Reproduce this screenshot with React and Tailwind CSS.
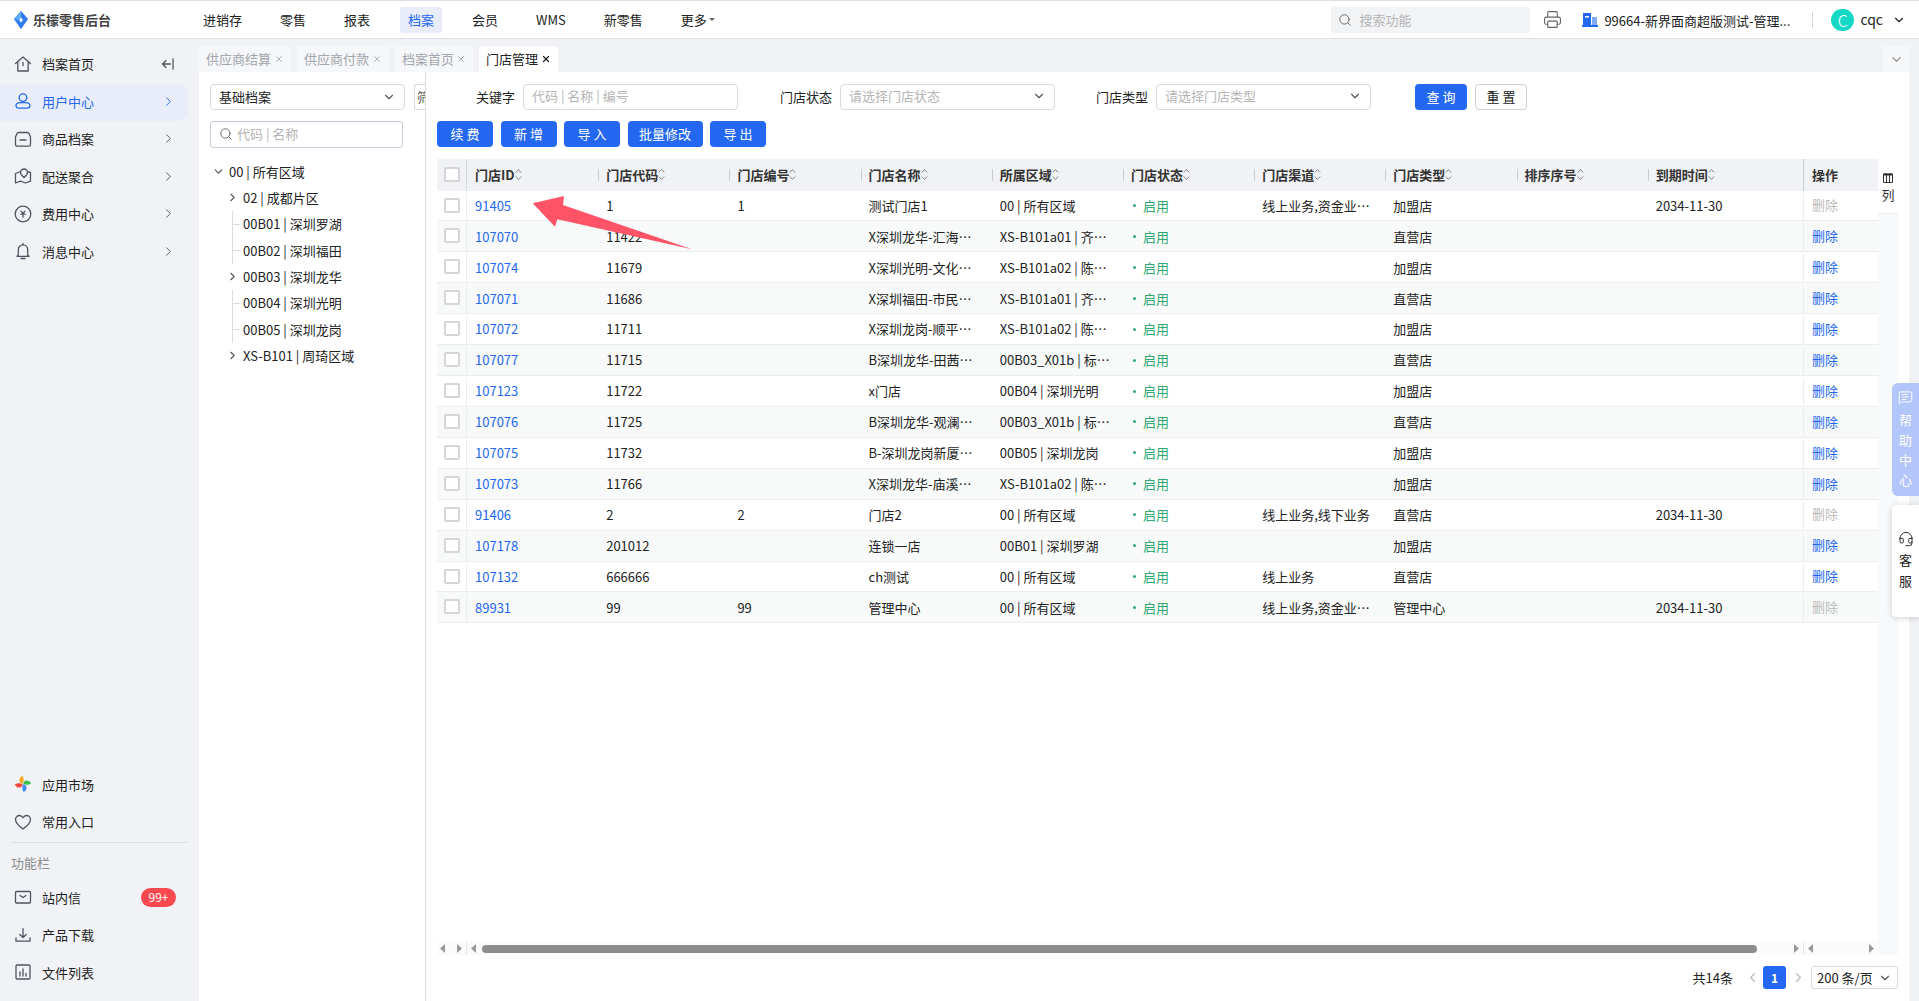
import React from 'react';
import { ChevronDown, ChevronLeft, ChevronRight, Headset, MessageSquareText, Printer, Search, X } from 'lucide-react';

const NAV = ['进销存', '零售', '报表', '档案', '会员', 'WMS', '新零售'];

const stroke = { fill: 'none', stroke: 'currentColor', strokeWidth: 1.3, strokeLinecap: 'round', strokeLinejoin: 'round' };

const Glyph = ({ children }) => (
  <svg width="18" height="18" viewBox="0 0 18 18" className="shrink-0" {...stroke}>
    {children}
  </svg>
);

const ICONS = {
  home: <Glyph><path d="M1.5 8.5 9 2l7.5 6.5M3.8 7.5V16h10.4V7.5M9 7.5v3" /></Glyph>,
  user: <Glyph><circle cx="9" cy="5.6" r="3.8" /><path d="M6.5 10.6h5c2.6 0 4.5 1.3 4.5 3s-1.4 2.6-3 2.6H5c-1.6 0-3-.9-3-2.6s1.900-3 4.500-3Z" /></Glyph>,
  goods: <Glyph><path d="M4.500 2.500h9c.8 0 1.300.5 1.600 1.200L16.500 7v7.500c0 1-.7 1.700-1.700 1.700H3.200c-1 0-1.700-.7-1.700-1.700V7l1.400-3.300c.3-.7.800-1.200 1.600-1.200Z" /><path d="M6 10h6" /></Glyph>,
  map: <Glyph><path d="M5.500 5 1.500 6.500V16l5-1.800 5 1.800 5-1.800V5.500L14.500 5" /><path d="M10 10.500c-2-1.800-3.500-3.300-3.500-5a3.500 3.500 0 0 1 7 0c0 1.700-1.500 3.200-3.500 5Z" /></Glyph>,
  fee: <Glyph><circle cx="9" cy="9" r="7.800" /><path d="m7 6.200 2 2.400 2-2.400M6.800 9.200h4.400M9 8.600v3.600" /></Glyph>,
  bell: <Glyph><path d="M4.300 13V7.500a4.700 4.700 0 0 1 9.400 0V13l1.300 1.300H3L4.300 13Z" /><path d="M7 16.500h4M9 1.500v1.300" /></Glyph>,
  heart: <Glyph><path d="M9 16C4.500 12.800 1.500 10 1.500 6.600 1.500 4.200 3.300 2.500 5.400 2.500c1.500 0 2.800.8 3.600 2.200.8-1.400 2.100-2.200 3.600-2.200 2.100 0 3.900 1.700 3.900 4.100C16.500 10 13.500 12.800 9 16Z" /></Glyph>,
  mail: <Glyph><rect x="1.500" y="3.500" width="15" height="11.500" rx="1" /><path d="m6 7.500 3 2 3-2" /></Glyph>,
  download: <Glyph><path d="M9 2.500v9M5.800 8.500 9 11.500l3.200-3M2 12v3.200h14V12" /></Glyph>,
  chart: <Glyph><rect x="2" y="2" width="14" height="14" rx="1" /><path d="M6 13V9M9 13V6M12 13v-2.500" /></Glyph>,
  apps: (
    <svg width="18" height="18" viewBox="0 0 18 18" className="shrink-0">
      <path d="M8.700 8.700C4.800 8.500 4 3.500 8.200.8c1.800 1.800 2 5.300.5 7.900Z" fill="#f7a823" />
      <path d="M9.300 8.700c.2-3.900 5.200-4.700 7.900-.5-1.800 1.800-5.300 2-7.900.5Z" fill="#3cc04f" />
      <path d="M9.300 9.300c3.900.2 4.700 5.200.5 7.900-1.800-1.800-2-5.300-.5-7.900Z" fill="#3b8cf5" />
      <path d="M8.700 9.300c-.2 3.900-5.200 4.700-7.900.5 1.800-1.800 5.300-2 7.900-.5Z" fill="#f0463c" />
    </svg>
  ),
};

const MENU_TOP = [
  { label: '档案首页', icon: 'home', collapse: true },
  { label: '用户中心', icon: 'user', active: true, arrow: true },
  { label: '商品档案', icon: 'goods', arrow: true },
  { label: '配送聚合', icon: 'map', arrow: true },
  { label: '费用中心', icon: 'fee', arrow: true },
  { label: '消息中心', icon: 'bell', arrow: true },
];

const TABS = [
  { label: '供应商结算', width: 'w-[92px]' },
  { label: '供应商付款', width: 'w-[92px]' },
  { label: '档案首页', width: 'w-[78px]' },
  { label: '门店管理', width: 'w-[79px]', active: true },
];

const COLUMNS = ['门店ID', '门店代码', '门店编号', '门店名称', '所属区域', '门店状态', '门店渠道', '门店类型', '排序序号', '到期时间'];

const ROWS = [
  { id: '91405', code: '1', no: '1', name: '测试门店1', area: '00 | 所有区域', channel: '线上业务,资金业…', type: '加盟店', expire: '2034-11-30', locked: true },
  { id: '107070', code: '11422', name: 'X深圳龙华-汇海…', area: 'XS-B101a01 | 齐…', type: '直营店' },
  { id: '107074', code: '11679', name: 'X深圳光明-文化…', area: 'XS-B101a02 | 陈…', type: '加盟店' },
  { id: '107071', code: '11686', name: 'X深圳福田-市民…', area: 'XS-B101a01 | 齐…', type: '直营店' },
  { id: '107072', code: '11711', name: 'X深圳龙岗-顺平…', area: 'XS-B101a02 | 陈…', type: '加盟店' },
  { id: '107077', code: '11715', name: 'B深圳龙华-田茜…', area: '00B03_X01b | 标…', type: '直营店' },
  { id: '107123', code: '11722', name: 'x门店', area: '00B04 | 深圳光明', type: '加盟店' },
  { id: '107076', code: '11725', name: 'B深圳龙华-观澜…', area: '00B03_X01b | 标…', type: '直营店' },
  { id: '107075', code: '11732', name: 'B-深圳龙岗新厦…', area: '00B05 | 深圳龙岗', type: '加盟店' },
  { id: '107073', code: '11766', name: 'X深圳龙华-庙溪…', area: 'XS-B101a02 | 陈…', type: '加盟店' },
  { id: '91406', code: '2', no: '2', name: '门店2', area: '00 | 所有区域', channel: '线上业务,线下业务', type: '直营店', expire: '2034-11-30', locked: true },
  { id: '107178', code: '201012', name: '连锁一店', area: '00B01 | 深圳罗湖', type: '加盟店' },
  { id: '107132', code: '666666', name: 'ch测试', area: '00 | 所有区域', channel: '线上业务', type: '直营店' },
  { id: '89931', code: '99', no: '99', name: '管理中心', area: '00 | 所有区域', channel: '线上业务,资金业…', type: '管理中心', expire: '2034-11-30', locked: true },
];

const TREE = [
  { label: '00 | 所有区域', kind: 'root' },
  { label: '02 | 成都片区', kind: 'branch' },
  { label: '00B01 | 深圳罗湖', kind: 'leaf' },
  { label: '00B02 | 深圳福田', kind: 'leaf' },
  { label: '00B03 | 深圳龙华', kind: 'branch' },
  { label: '00B04 | 深圳光明', kind: 'leaf' },
  { label: '00B05 | 深圳龙岗', kind: 'leaf' },
  { label: 'XS-B101 | 周琦区域', kind: 'branch' },
];

const GRID = 'grid grid-cols-[30px_repeat(9,131.2px)_155.2px_75px]';

const MenuItem = ({ item }) => (
  <div
    className={`flex h-[37.5px] w-[188px] items-center gap-[10px] rounded-r-[10px] pb-[2px] pl-[14px] pr-[12px] ${
      item.active ? 'bg-[#e8edf9] text-[#2468f2]' : 'text-[#4e5560]'
    }`}
  >
    {ICONS[item.icon]}
    <span className={item.active ? 'text-[#2468f2]' : 'text-[#222]'}>{item.label}</span>
    {item.arrow && <ChevronRight size={15} strokeWidth={1.5} className="ml-auto" />}
    {item.collapse && (
      <svg width="13" height="12" viewBox="0 0 13 12" className="ml-auto mr-[2px]" {...stroke}>
        <path d="M12 1v10M9.500 6H1.500M5 2.500 1.500 6 5 9.500" />
      </svg>
    )}
    {item.badge && (
      <span className="ml-auto flex h-[19px] w-[35px] items-center justify-center rounded-full bg-[#f9494f] text-[12px] text-white">
        {item.badge}
      </span>
    )}
  </div>
);

const Sidebar = () => (
  <aside className="flex w-[199px] shrink-0 flex-col bg-[#f1f2f5] pb-[9px] pt-[7px]">
    {MENU_TOP.map((item) => (
      <MenuItem key={item.label} item={item} />
    ))}
    <div className="flex-1" />
    <MenuItem item={{ label: '应用市场', icon: 'apps' }} />
    <MenuItem item={{ label: '常用入口', icon: 'heart' }} />
    <div className="ml-[11px] w-[177px] border-t border-[#dcdee2]" />
    <div className="flex h-[37px] items-center pl-[11px] pt-[3px] text-[#8c8c8c]">功能栏</div>
    <MenuItem item={{ label: '站内信', icon: 'mail', badge: '99+' }} />
    <MenuItem item={{ label: '产品下载', icon: 'download' }} />
    <MenuItem item={{ label: '文件列表', icon: 'chart' }} />
  </aside>
);

const Header = () => (
  <header className="flex h-[39px] shrink-0 items-center border-b border-t border-[#dfe0e3] bg-white pl-[14px] pr-[13px]">
    <div className="flex w-[181px] shrink-0 items-center gap-[5px]">
      <svg width="14" height="18" viewBox="0 0 14 18">
        <path d="M7 .5 13.500 8 7 17.500.5 8 7 .5Z" fill="#2f7bf0" stroke="#2f7bf0" strokeLinejoin="round" />
        <path d="M7 6.500 9 9l-2 2.500L5 9l2-2.500Z" fill="#fff" />
        <path d="M7 .5 .5 8 5 9l2-2.500V.5Z" fill="#63b0fa" />
      </svg>
      <span className="font-bold text-[#444]">乐檬零售后台</span>
    </div>
    <nav className="flex items-center gap-[22px]">
      {NAV.map((name) => (
        <a
          key={name}
          className={`flex h-[26px] items-center rounded-[3px] px-2 ${
            name === '档案' ? 'bg-[#e8edf9] text-[#2468f2]' : 'text-[#222]'
          }`}
        >
          {name}
        </a>
      ))}
      <a className="flex h-[26px] items-center gap-[2px] px-2 text-[#222]">
        更多
        <span className="h-0 w-0 border-x-[3px] border-t-[3px] border-x-transparent border-t-[#666]" />
      </a>
    </nav>
    <div className="ml-auto flex h-[26px] w-[199px] items-center gap-[7px] rounded-[3px] bg-[#f2f3f5] pl-[7px] text-[#b5b5b5]">
      <Search size={14} strokeWidth={1.6} className="text-[#666]" />
      搜索功能
    </div>
    <Printer size={19} strokeWidth={1.4} className="ml-[13px] text-[#666]" />
    <svg width="16" height="14" viewBox="0 0 16 14" className="ml-[20px]">
      <rect x="1" y="0" width="8" height="12" fill="#2468f2" />
      <rect x="10" y="4" width="5" height="8" fill="#7fa8f5" />
      <rect x="0" y="12" width="16" height="2" fill="#2468f2" />
      <rect x="3" y="3" width="4" height="1.500" fill="#fff" />
    </svg>
    <span className="ml-[6px] w-[186px] whitespace-nowrap pt-[2px] text-[#222]">99664-新界面商超版测试-管理...</span>
    <span className="ml-[22px] h-[16px] border-l border-[#d5d5d5]" />
    <span className="ml-[18px] flex h-[22px] w-[23px] items-center justify-center rounded-full bg-[#14d8c4] text-[16px] font-light text-white">
      C
    </span>
    <span className="ml-[6px] text-[14px] text-[#222]">cqc</span>
    <ChevronDown size={14} strokeWidth={2} className="ml-[9px] text-[#222]" />
  </header>
);

const Tabs = () => (
  <div className="flex h-[33px] shrink-0 items-end gap-[6px] bg-[#f1f2f5]">
    {TABS.map((tab) => (
      <div
        key={tab.label}
        className={`flex h-[26px] items-center justify-between rounded-t-[3px] px-[7px] ${tab.width} ${
          tab.active ? 'bg-white text-[#222]' : 'bg-[#f6f7f9] text-[#a3a6ad]'
        }`}
      >
        {tab.label}
        <X size={10} strokeWidth={tab.active ? 3 : 2} />
      </div>
    ))}
    <div className="ml-auto flex h-[26px] w-[26px] items-center justify-center rounded-t-[3px] bg-[#f6f7f9]">
      <ChevronDown size={15} className="text-[#8c8c8c]" />
    </div>
  </div>
);

const TreePane = () => (
  <div className="w-[227px] shrink-0 border-r border-[#dcdcdc]">
    <div className="mt-[12px] flex h-[26px] pl-[11px]">
      <div className="flex w-[195px] items-center justify-between rounded-[4px] border border-[#d9d9d9] pb-[1px] pl-[8px] pr-[8px] text-[#222]">
        基础档案
        <ChevronDown size={14} className="text-[#555]" />
      </div>
      <div className="ml-[9px] w-[11px] overflow-hidden whitespace-nowrap rounded-l-[3px] border border-r-0 border-[#d9d9d9] pl-[2px] leading-[24px] text-[#555]">
        筛选
      </div>
    </div>
    <div className="ml-[11px] mt-[11px] flex h-[27px] w-[193px] items-center gap-[4px] rounded-[3px] border border-[#c5cbd8] pb-[2px] pl-[8px] text-[#b5b5b5]">
      <Search size={14} strokeWidth={1.6} className="text-[#666]" />
      代码 | 名称
    </div>
    <div className="mt-[10.5px] text-[#222]">
      {TREE.map((node) => (
        <div
          key={node.label}
          className={`flex h-[26.3px] items-center ${
            node.kind === 'root' ? 'pl-[13px]' : node.kind === 'branch' ? 'pl-[27px]' : 'pl-[33px]'
          }`}
        >
          {node.kind === 'root' && <ChevronDown size={13} className="mr-[4px] text-[#555]" />}
          {node.kind === 'branch' && <ChevronRight size={13} className="mr-[4px] text-[#555]" />}
          {node.kind === 'leaf' && (
            <span className="flex h-full w-[11px] items-center border-l border-[#dcdcdc]">
              <span className="h-px w-[7px] bg-[#dcdcdc]" />
            </span>
          )}
          {node.label}
        </div>
      ))}
    </div>
  </div>
);

const Field = ({ label, labelWidth, placeholder, select }) => (
  <>
    <span className={`${labelWidth} shrink-0 text-right text-[#222]`}>{label}</span>
    <div className="ml-[8px] flex h-[26px] w-[215px] items-center justify-between rounded-[4px] border border-[#d9d9d9] pb-[2px] pl-[8px] pr-[8px] text-[#b5b5b5]">
      {placeholder}
      {select && <ChevronDown size={14} className="text-[#555]" />}
    </div>
  </>
);

const SortIcon = () => (
  <svg width="7" height="13" viewBox="0 0 7 13" className="shrink-0" fill="none" stroke="#888" strokeWidth="1">
    <path d="m.8 4.500 2.700-3 2.700 3M.8 8.500l2.700 3 2.700-3" />
  </svg>
);

const Box = () => <span className="block h-[15px] w-[16px] rounded-[2px] border-2 border-[#d6d6d6] bg-white" />;

const Triangle = ({ left }) => (
  <svg width="5" height="9" viewBox="0 0 5 9" className="shrink-0" fill="#999">
    <path d={left ? 'M5 0v9L0 4.500Z' : 'M0 0v9l5-4.500Z'} />
  </svg>
);

const Cell = ({ children }) => <div className="overflow-hidden whitespace-nowrap pl-2 text-[#222]">{children}</div>;

const StoreTable = () => (
  <div className="flex w-[1441px] shrink-0 flex-col">
    <div className={`${GRID} h-[31.500px] shrink-0 items-center bg-[#f1f2f5]`}>
      <div className="flex h-full items-center justify-center border-r border-[#d5d8de]">
        <Box />
      </div>
      {COLUMNS.map((name, i) => (
        <div key={name} className="relative flex items-center pl-2 font-bold text-[#333]">
          {i > 0 && <span className="absolute left-0 h-[12px] border-l border-[#c9ccd2]" />}
          {name}
          <SortIcon />
        </div>
      ))}
      <div className="flex h-full items-center border-l border-[#c9ccd2] pl-2 font-bold text-[#333]">操作</div>
    </div>
    {ROWS.map((row, i) => (
      <div
        key={row.id}
        className={`${GRID} h-[30.930px] shrink-0 items-center border-b border-[#eceded] ${i % 2 ? 'bg-[#f8fafa]' : 'bg-white'}`}
      >
        <div className="mt-[2px] flex h-[28px] items-center justify-center border-r border-[#eceded] pb-[3px]">
          <Box />
        </div>
        <Cell><span className="text-[#2468f2]">{row.id}</span></Cell>
        <Cell>{row.code}</Cell>
        <Cell>{row.no}</Cell>
        <Cell>{row.name}</Cell>
        <Cell>{row.area}</Cell>
        <Cell>
          <span className="flex items-center gap-[7px] pl-[2px] text-[#2fa871]">
            <span className="h-[3px] w-[3px] rounded-full bg-[#2fa871]" />
            启用
          </span>
        </Cell>
        <Cell>{row.channel}</Cell>
        <Cell>{row.type}</Cell>
        <Cell />
        <Cell>{row.expire}</Cell>
        <div className={`mt-[2px] flex h-[28px] items-center border-l border-[#eceded] pb-[3px] pl-2 ${row.locked ? 'text-[#bbb]' : 'text-[#2468f2]'}`}>
          删除
        </div>
      </div>
    ))}
    <div className="flex-1" />
    <div className="flex h-[13px] shrink-0 items-center bg-[#fbfbfc]">
      <div className="flex h-full w-[30px] items-center justify-between border-r border-[#e6e6e6] pl-[3px] pr-[4px]">
        <Triangle left />
        <Triangle />
      </div>
      <div className="flex h-full w-[1336px] items-center pl-[4px] pr-[4px]">
        <Triangle left />
        <span className="ml-[6px] h-[8px] w-[1275px] rounded-full bg-[#8c8c8c]" />
        <span className="ml-auto"><Triangle /></span>
      </div>
      <div className="flex h-full w-[75px] items-center justify-between border-l border-[#e6e6e6] pl-[4px] pr-[4px]">
        <Triangle left />
        <Triangle />
      </div>
    </div>
  </div>
);

const ColumnPanel = () => (
  <div className="h-full w-[20px] bg-[#f8f9fb]">
    <div className="flex h-[55px] flex-col items-center border-b border-[#eceded] bg-white pt-[14px] text-[#333]">
      <svg width="10" height="10" viewBox="0 0 10 10" fill="none" stroke="#333">
        <path d="M.5 1h9v8.500h-9ZM3.500 1v8.500M6.500 1v8.500" />
        <path d="M.5 1.500h9" strokeWidth="2" />
      </svg>
      <span className="mt-[1px] leading-[22px]">列</span>
    </div>
  </div>
);

const Pager = () => (
  <div className="flex h-[46px] shrink-0 items-start justify-end pr-[11px] pt-[11px] text-[#222]">
    <span className="leading-[23px]">共14条</span>
    <ChevronLeft size={15} className="ml-[12px] mt-[4px] text-[#bbb]" />
    <span className="ml-[3px] flex h-[23px] w-[23px] items-center justify-center rounded-[3px] bg-[#2468f2] text-[12px] font-bold text-white">
      1
    </span>
    <ChevronRight size={15} className="ml-[5px] mt-[4px] text-[#bbb]" />
    <div className="ml-[5px] flex h-[23px] w-[87px] items-center justify-between rounded-[3px] border border-[#d9d9d9] pl-[5px] pr-[5px]">
      200 条/页
      <ChevronDown size={14} className="text-[#555]" />
    </div>
  </div>
);

const StorePane = () => (
  <div className="flex min-w-0 flex-1 flex-col pl-[11px]">
    <div className="mt-[12px] flex h-[26px] shrink-0 items-center">
      <Field label="关键字" labelWidth="w-[78px]" placeholder="代码 | 名称 | 编号" />
      <Field label="门店状态" labelWidth="w-[94px]" placeholder="请选择门店状态" select />
      <Field label="门店类型" labelWidth="w-[93px]" placeholder="请选择门店类型" select />
      <button className="ml-[44px] h-[26px] w-[52px] rounded-[4px] bg-[#2468f2] text-white">查 询</button>
      <button className="ml-[8px] h-[26px] w-[52px] rounded-[4px] border border-[#d0d0d0] bg-white text-[#222]">重 置</button>
    </div>
    <div className="mt-[11px] flex h-[26px] shrink-0 gap-[7.500px]">
      {['续 费', '新 增', '导 入'].map((label) => (
        <button key={label} className="w-[56px] rounded-[4px] bg-[#2468f2] text-white">{label}</button>
      ))}
      <button className="w-[75px] rounded-[4px] bg-[#2468f2] text-white">批量修改</button>
      <button className="w-[56px] rounded-[4px] bg-[#2468f2] text-white">导 出</button>
    </div>
    <div className="mt-[12px] flex min-h-0 flex-1">
      <StoreTable />
      <ColumnPanel />
    </div>
    <Pager />
  </div>
);

export default function App() {
  return (
    <div className="relative flex h-[1001px] flex-col overflow-hidden bg-white font-['Noto_Sans_CJK_SC','Noto_Sans',sans-serif] text-[13px]">
      <Header />
      <div className="flex min-h-0 flex-1">
        <Sidebar />
        <main className="flex min-w-0 flex-1 flex-col bg-[#f1f2f5] pr-[10px]">
          <Tabs />
          <div className="flex min-h-0 flex-1 bg-white">
            <TreePane />
            <StorePane />
          </div>
        </main>
      </div>

      {/* red annotation arrow drawn over the table */}
      <svg width="170" height="60" viewBox="0 0 170 60" className="absolute left-[528px] top-[193px]">
        <path d="M4.700 10.300 36 3l-1 9 129 44.300L29.300 26.300 27 33.700Z" fill="#ff5468" />
      </svg>

      <div className="absolute right-0 top-[383px] flex h-[113px] w-[27px] flex-col items-center rounded-l-[6px] bg-[#b3c6fb] pt-[7px] leading-[20px] text-white">
        <MessageSquareText size={15} strokeWidth={1.5} className="mb-[5px]" />
        <span>帮</span>
        <span>助</span>
        <span>中</span>
        <span>心</span>
      </div>
      <div className="absolute right-0 top-[505px] flex h-[112px] w-[27px] flex-col items-center justify-center rounded-l-[4px] bg-white leading-[21px] text-[#222] shadow-[0_1px_6px_rgba(0,0,0,0.18)]">
        <Headset size={16} strokeWidth={1.4} className="mb-[2px]" />
        <span>客</span>
        <span>服</span>
      </div>
    </div>
  );
}
